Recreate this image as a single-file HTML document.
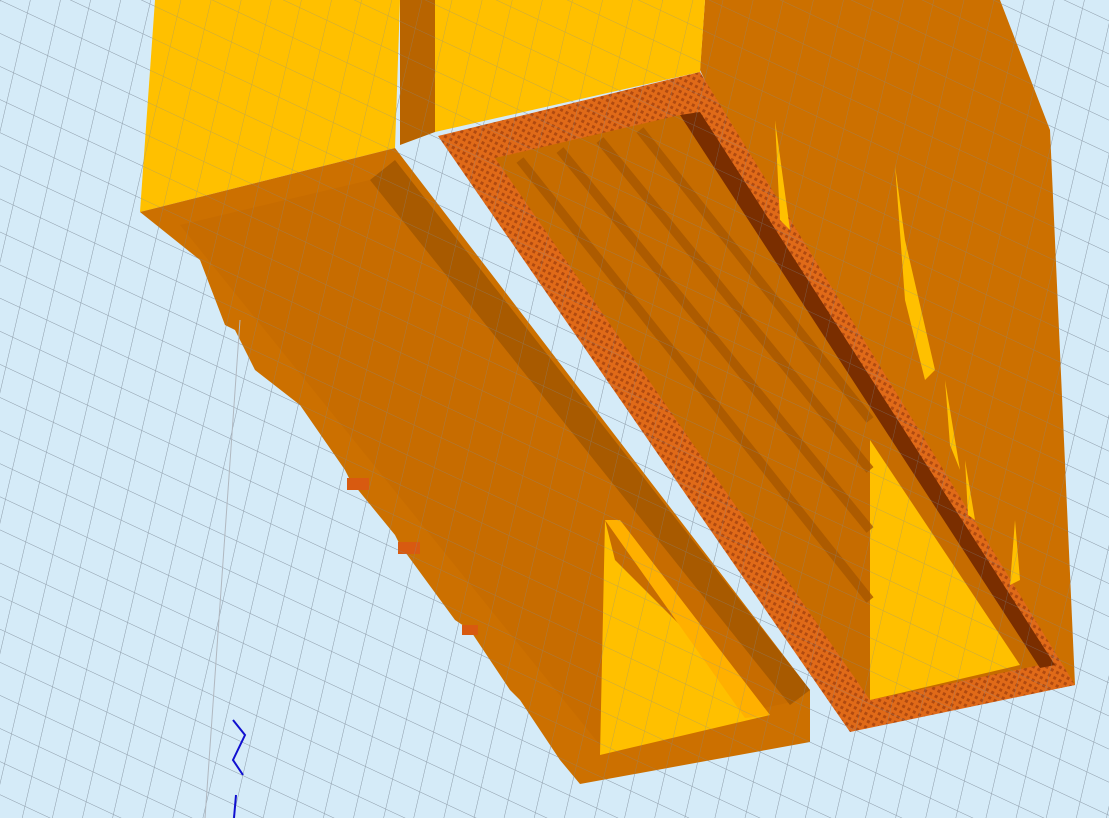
<!DOCTYPE html>
<html><head><meta charset="utf-8"><style>
html,body{margin:0;padding:0;width:1109px;height:818px;overflow:hidden;background:#d5ebf8}
</style></head><body>
<svg width="1109" height="818" viewBox="0 0 1109 818" xmlns="http://www.w3.org/2000/svg">
<defs>
<pattern id="g" width="30" height="30" patternUnits="userSpaceOnUse" patternTransform="rotate(25) skewX(12)">
<path d="M0 0H30M0 0V30" stroke="#7f8c99" stroke-width="1" fill="none"/>
</pattern>
<pattern id="fin" width="6" height="6" patternUnits="userSpaceOnUse" patternTransform="rotate(28)">
<rect width="6" height="6" fill="#e06a18"/><rect width="3" height="3" fill="#b04a10"/>
</pattern>
</defs>
<rect width="1109" height="818" fill="#d5ebf8"/>
<rect width="1109" height="818" fill="url(#g)" opacity="0.6"/>
<polygon points="705,0 1000,0 1050,130 1075,685 1000,700 700,70" fill="#cc7000"/>
<polygon points="435,0 705,0 700,72 435,132" fill="#ffc000"/>
<polygon points="438,136 700,72 1075,685 850,732" fill="url(#fin)"/>
<polygon points="495,158 680,115 1040,665 870,700" fill="#c66c00"/>
<polygon points="680,115 700,112 1055,665 1040,668" fill="#7a2e00"/>
<polygon points="870,440 1020,665 870,700" fill="#ffc000"/>
<g stroke="#a85800" stroke-width="9" opacity="0.8">
<line x1="520" y1="160" x2="870" y2="600"/>
<line x1="560" y1="150" x2="870" y2="530"/>
<line x1="600" y1="140" x2="870" y2="470"/>
<line x1="640" y1="130" x2="870" y2="420"/>
</g>
<polygon points="775,120 790,230 780,220" fill="#ffc000"/>
<polygon points="895,165 905,240 935,370 925,380 905,300" fill="#ffc000"/>
<polygon points="945,380 955,440 960,470 950,445" fill="#ffc000"/>
<polygon points="965,460 975,520 968,515" fill="#ffc000"/>
<polygon points="1015,520 1020,580 1010,585" fill="#ffc000"/>
<polygon points="400,0 435,0 435,132 400,145" fill="#b86400"/>
<polygon points="155,0 400,0 395,148 140,212" fill="#ffc000"/>
<polygon points="140,212 395,148 810,690 810,742 580,784 560,760 520,700 510,690 470,630 455,620 400,545 395,535 350,480 345,470 300,405 255,370 250,360 235,330 225,325 200,260" fill="#cc7000"/>
<polygon points="180,225 370,180 800,700 600,745" fill="#c66c00" opacity="0.9"/>
<polygon points="370,180 395,160 810,690 790,705" fill="#a85a00"/>
<polygon points="605,520 615,560 770,715 600,755" fill="#ffc000"/>
<polygon points="605,520 620,520 770,715 745,718" fill="#ffb000"/>
<rect x="347" y="478" width="22" height="12" fill="#d85a10"/>
<rect x="398" y="542" width="22" height="12" fill="#d85a10"/>
<rect x="462" y="625" width="16" height="10" fill="#d85a10"/>
<rect width="1109" height="818" fill="url(#g)" opacity="0.45"/>
<line x1="240" y1="320" x2="205" y2="818" stroke="#b0b8c0" stroke-width="1"/>
<path d="M233 720 L245 735 L233 760 L243 775" stroke="#1010d0" stroke-width="2" fill="none"/>
<line x1="236" y1="795" x2="234" y2="818" stroke="#1010d0" stroke-width="2"/>
</svg>
</body></html>
